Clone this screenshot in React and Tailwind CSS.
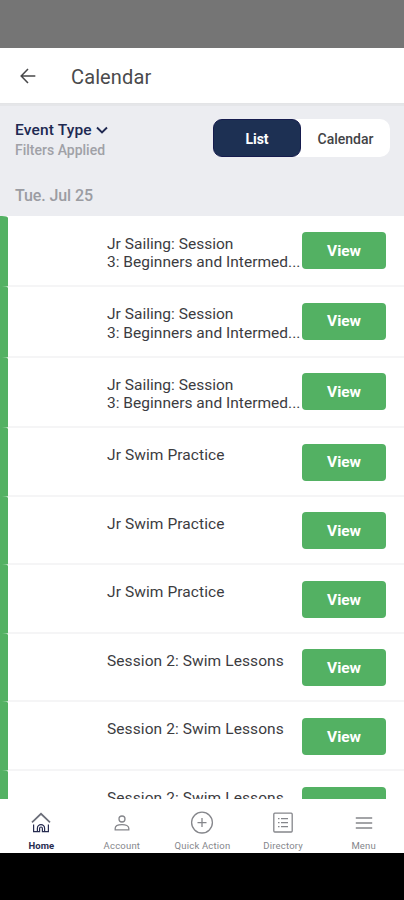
const events = [
  { id: 1, title: ['Jr Sailing: Session', '3: Beginners and Intermed...'] },
  { id: 2, title: ['Jr Sailing: Session', '3: Beginners and Intermed...'] },
  { id: 3, title: ['Jr Sailing: Session', '3: Beginners and Intermed...'] },
  { id: 4, title: ['Jr Swim Practice'] },
  { id: 5, title: ['Jr Swim Practice'] },
  { id: 6, title: ['Jr Swim Practice'] },
  { id: 7, title: ['Session 2: Swim Lessons'] },
  { id: 8, title: ['Session 2: Swim Lessons'] },
  { id: 9, title: ['Session 2: Swim Lessons'] },
]

function Icon({ children, className = 'w-6 h-6' }) {
  return (
    <svg viewBox="0 0 24 24" fill="none" stroke="currentColor" strokeWidth="1.3" className={className}>
      {children}
    </svg>
  )
}

function HomeIcon() {
  return (
    <Icon>
      <path d="M3 11.4 12 2.8l9 8.6" stroke="#6b6e79" strokeWidth="1.7" />
      <path d="M4.6 13.4v7.2h3.8v-3.4a3.6 3.6 0 0 1 7.2 0v3.4h3.8v-7.2M8.4 20.6h2.2v-3.2a1.4 1.4 0 0 1 2.8 0v3.2h2.2" strokeWidth="1.2" />
    </Icon>
  )
}

function AccountIcon() {
  return (
    <Icon>
      <circle cx="12" cy="8" r="3" />
      <path d="M5.2 18.8v-1.6c0-2.5 3-3.6 6.8-3.6s6.8 1.1 6.8 3.6v1.6z" />
    </Icon>
  )
}

function QuickActionIcon() {
  return (
    <Icon>
      <circle cx="12" cy="11.6" r="10.4" />
      <path d="M12 7.1v9M7.5 11.6h9" />
    </Icon>
  )
}

function DirectoryIcon() {
  return (
    <Icon>
      <rect x="2.8" y="2.2" width="18.4" height="18.8" rx="1" />
      <path d="M7 7.6h1.5M7 11.6h1.5M7 15.6h1.5M10 7.6h7M10 11.6h7M10 15.6h7" />
    </Icon>
  )
}

function MenuIcon() {
  return (
    <Icon>
      <path d="M3.8 7h16.4M3.8 12h16.4M3.8 17h16.4" />
    </Icon>
  )
}

const tabs = [
  { label: 'Home', icon: HomeIcon, active: true },
  { label: 'Account', icon: AccountIcon },
  { label: 'Quick Action', icon: QuickActionIcon },
  { label: 'Directory', icon: DirectoryIcon },
  { label: 'Menu', icon: MenuIcon },
]

function EventRow({ title }) {
  const multiline = title.length > 1

  return (
    <li className={`flex shrink-0 ${multiline ? 'h-[70.5px]' : 'h-[68.6px]'}`}>
      {/* Category stripe */}
      <div className="w-2 -mt-px bg-[#53b163] rounded-tr-[6px_2px] border-b border-[#b9dfc0]" />
      <div className="flex flex-1 border-b-2 border-[#f5f5f6] pl-[99px] pr-[18px]">
        <div
          className={`w-[195px] pt-[18px] text-[15.5px] leading-[18.5px] text-[#3c3c3f] whitespace-nowrap ${
            multiline ? 'tracking-[0.02px]' : 'tracking-[0.09px]'
          }`}
        >
          {title.map((line) => (
            <p key={line}>{line}</p>
          ))}
        </div>
        <button className="w-[84px] h-[37px] mt-[15.7px] pt-[1.5px] shrink-0 rounded-[4px] bg-[#53b163] text-[15.5px] font-bold text-white">
          View
        </button>
      </div>
    </li>
  )
}

export default function App() {
  return (
    <div className="flex flex-col w-[404px] h-[900px] overflow-hidden bg-white font-[Roboto,sans-serif]">
      {/* Status bar */}
      <div className="h-12 shrink-0 bg-[#757575]" />

      {/* Header */}
      <header className="flex items-center h-[56px] shrink-0 pl-5 border-b border-[#e3e4e6]">
        <button className="text-[#48484a]">
          <Icon className="w-4 h-4">
            <path d="M23 12H2M12 1.5 1.8 12 12 22.5" strokeWidth="2.3" />
          </Icon>
        </button>
        <h1 className="ml-[35px] mt-0.5 text-[20px] tracking-[0.12px] text-[#4a4a4c]">Calendar</h1>
      </header>

      {/* Filters */}
      <section className="flex flex-col h-[112px] shrink-0 pl-[15px] pr-[14px] pt-[15px] bg-[#ecedf1] border-t-2 border-[#e5e6e9]">
        <div className="flex justify-between items-start h-[38px] -mt-px">
          <div>
            <button className="flex items-center text-[15.5px] leading-5 tracking-[0.15px] font-medium text-[#202951]">
              Event Type
              <Icon className="w-3 h-3 ml-1">
                <path d="m2 7 10 10L22 7" strokeWidth="3.8" />
              </Icon>
            </button>
            <p className="text-[14px] leading-5 font-medium text-[#a0a1a7]">Filters Applied</p>
          </div>
          <div className="flex h-[38px] w-[177px] -mt-px rounded-[10px] bg-white text-[14px]">
            <button className="w-[88px] pt-0.5 rounded-[9px] bg-[#1d3053] border border-[#161c4e] font-bold text-white">
              List
            </button>
            <button className="flex-1 pt-0.5 font-medium text-[#434346]">Calendar</button>
          </div>
        </div>
        <h2 className="mt-[24px] text-[16px] leading-7 tracking-[-0.1px] font-medium text-[#9b9ca2]">Tue. Jul 25</h2>
      </section>

      {/* Event list */}
      <ul className="flex flex-col flex-1 min-h-0 pt-[1.5px] -mt-px [clip-path:inset(0)]">
        {events.map((event) => (
          <EventRow key={event.id} title={event.title} />
        ))}
      </ul>

      {/* Bottom tabs */}
      <nav className="grid grid-cols-5 h-[54px] shrink-0 pt-3 pl-px bg-white">
        {tabs.map((tab) => (
          <button
            key={tab.label}
            className={`flex flex-col items-center justify-start ${tab.active ? 'text-[#272c50]' : 'text-[#85868b]'}`}
          >
            <tab.icon />
            <span
              className={`mt-[5px] text-[9.5px] leading-3 whitespace-nowrap ${
                tab.active ? 'font-bold' : 'tracking-[0.2px] font-normal'
              }`}
            >
              {tab.label}
            </span>
          </button>
        ))}
      </nav>

      <div className="h-[47px] shrink-0 bg-black" />
    </div>
  )
}
